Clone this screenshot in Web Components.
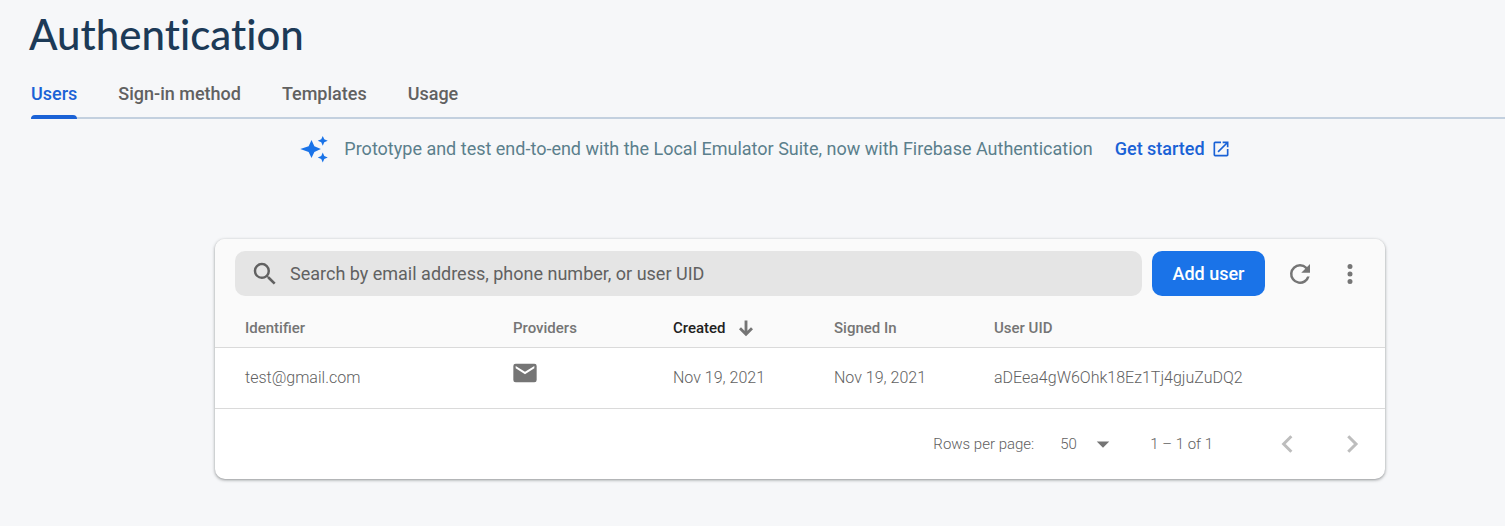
<!DOCTYPE html>
<html lang="en">
<head>
<meta charset="utf-8">
<title>Authentication</title>
<style>
html{background:#f6f7f9}
body{margin:0;font-family:Roboto,sans-serif;color:#757575}
</style>
</head>
<body>
<auth-page></auth-page>

<template id="auth-page">
<style>
:host{display:block}
header{padding:8px 0 0 29px}
h1{margin:0;font:500 42px/52px Lato,sans-serif;font-variant-ligatures:none;color:#1c3a57}
main{padding-bottom:46px}
.banner{padding:10px 0 0 25px}
.card{padding:70px 120px 0 215px}
</style>
<header><h1>Authentication</h1></header>
<nav-tabs>
<nav-tab active>Users</nav-tab><nav-tab>Sign-in method</nav-tab><nav-tab>Templates</nav-tab><nav-tab>Usage</nav-tab>
</nav-tabs>
<main>
<div class="banner"><promo-banner>Prototype and test end-to-end with the Local Emulator Suite, now with Firebase Authentication</promo-banner></div>
<div class="card"><user-card></user-card></div>
</main>
</template>

<template id="nav-tabs">
<style>
:host{display:flex;gap:41px;margin-left:31px;height:59px;box-sizing:border-box;border-bottom:2px solid #c3d0df}
</style>
<slot></slot>
</template>

<template id="nav-tab">
<style>
:host{display:block;--c:#616161}
:host([active]){--c:#1a62d6}
a{display:block;box-sizing:border-box;height:59px;padding-top:22px;font-size:18px;line-height:24px;font-weight:500;color:var(--c);text-decoration:none;position:relative}
:host([active]) a::after{content:"";position:absolute;left:0;right:0;bottom:0;height:4px;border-radius:4px 4px 0 0;background:#1a62d6}
</style>
<a href="#"><slot></slot></a>
</template>

<template id="promo-banner">
<style>
:host{display:flex;align-items:center;justify-content:center;height:40px;font-size:18px;line-height:24px;font-weight:400;color:#5b7f8c}
.spark{margin-right:15px}
a{display:flex;align-items:center;gap:6px;margin-left:22px;font-weight:500;color:#1a62d6;text-decoration:none}
</style>
<ui-icon class="spark" name="spark" size="30" style="color:#1a73e8"></ui-icon>
<span><slot></slot></span>
<a href="#">Get started <ui-icon name="open" size="20"></ui-icon></a>
</template>

<template id="user-card">
<style>
:host{display:block;border-radius:10px;background:#fff;overflow:hidden;box-shadow:0 1px 3px 1px rgba(60,64,67,.2),0 1px 2px rgba(60,64,67,.3)}
</style>
<user-toolbar></user-toolbar>
<user-table></user-table>
<table-pager></table-pager>
</template>

<template id="user-toolbar">
<style>
:host{display:flex;align-items:center;gap:10px;padding:12px 10px 12px 20px;background:#fafafa}
label{flex:1;display:flex;align-items:center;gap:10px;height:45px;padding-left:15px;border-radius:10px;background:#e5e5e5;color:#616161}
input{flex:1;height:45px;padding:0;border:0;outline:0;background:none;font:400 18px/24px Roboto,sans-serif;color:#333}
input::placeholder{color:#616161;opacity:1}
.add{height:45px;min-width:113px;padding:0 20px;border:0;border-radius:10px;background:#1a73e8;color:#fff;font:500 18px/24px Roboto,sans-serif}
.icons{display:flex}
.icons button{display:flex;align-items:center;justify-content:center;width:50px;height:45px;padding:0;border:0;background:none;color:#757575}
</style>
<label><ui-icon name="search" size="30"></ui-icon><input type="text" aria-label="Search" placeholder="Search by email address, phone number, or user UID"></label>
<button class="add">Add user</button>
<div class="icons">
<button aria-label="Refresh"><ui-icon name="refresh" size="30"></ui-icon></button>
<button aria-label="More options"><ui-icon name="more" size="30"></ui-icon></button>
</div>
</template>

<template id="user-table">
<style>
:host{display:block}
table{width:100%;border-collapse:separate;border-spacing:0;table-layout:fixed}
th,td{padding:0;text-align:left;border-bottom:1px solid #dadada}
th:first-child,td:first-child{padding-left:30px}
th{height:39px;background:#fafafa;font-size:15px;font-weight:500;line-height:20px}
td{height:60px;font-size:16px;font-weight:300;line-height:24px;color:#616161}
.id{width:268px}.mid{width:160px}.sorted{width:161px}
.sorted{color:#212121}
.sort{display:flex;align-items:center;gap:10px}
.sort ui-icon{color:#757575}
td ui-icon{margin:0 0 10px -2px;color:#757575}
</style>
<table>
<thead><tr>
<th class="id" scope="col">Identifier</th>
<th class="mid" scope="col">Providers</th>
<th class="mid sorted" scope="col" aria-sort="descending"><span class="sort">Created <ui-icon name="down" size="20"></ui-icon></span></th>
<th class="mid" scope="col">Signed In</th>
<th scope="col">User UID</th>
</tr></thead>
<tbody><tr>
<td>test@gmail.com</td>
<td><ui-icon name="mail" size="28"></ui-icon></td>
<td>Nov 19, 2021</td>
<td>Nov 19, 2021</td>
<td>aDEea4gW6Ohk18Ez1Tj4gjuZuDQ2</td>
</tr></tbody>
</table>
</template>

<template id="table-pager">
<style>
:host{display:flex;align-items:center;justify-content:flex-end;height:70px;padding-right:8px;font-size:15px;line-height:20px;font-weight:300;color:#616161}
.size{display:flex;align-items:center}
.pick{display:grid;align-items:center;width:54px;margin-left:26px}
.pick>*{grid-area:1/1}
.pick ui-icon{justify-self:end;margin-right:-4px;color:#757575;pointer-events:none}
select{appearance:none;width:100%;padding:0;border:0;background:none;font:inherit;color:inherit}
.range{margin:0 49px 0 36px}
.nav{display:flex;gap:15px}
.nav button{display:flex;align-items:center;justify-content:center;width:50px;height:50px;padding:0;border:0;background:none;color:#bdbdbd}
</style>
<div class="size"><label for="rows">Rows per page:</label>
<span class="pick"><select id="rows"><option>50</option></select><ui-icon name="drop" size="30"></ui-icon></span></div>
<span class="range">1 – 1 of 1</span>
<div class="nav">
<button aria-label="Previous page" disabled><ui-icon name="prev" size="30"></ui-icon></button>
<button aria-label="Next page" disabled><ui-icon name="next" size="30"></ui-icon></button>
</div>
</template>

<script>
const ICONS = {
  spark: '<path d="M10 4.800 12.300 9.700 17.500 12 12.300 14.300 10 19.200 7.700 14.300 1 12 7.700 9.700ZM19 1.500l1.200 2.700 2.800 1.200-2.800 1.200L19 9.400l-1.200-2.800L15 5.400l2.800-1.200ZM19 14.800l1.200 2.800 2.800 1.200-2.800 1.200L19 22.700 17.800 20 15 18.800l2.800-1.200Z"/>',
  open: '<path d="M19 19H5V5h7V3H5a2 2 0 0 0-2 2v14a2 2 0 0 0 2 2h14c1.100 0 2-.9 2-2v-7h-2v7zM14 3v2h3.590l-9.830 9.830 1.410 1.410L19 6.410V10h2V3h-7z"/>',
  search: '<path d="M15.500 14h-.790l-.280-.270A6.470 6.470 0 0 0 16 9.500 6.500 6.500 0 1 0 9.500 16c1.610 0 3.090-.590 4.230-1.570l.270.280v.790l5 4.990L20.490 19l-4.990-5zm-6 0C7.010 14 5 11.990 5 9.500S7.010 5 9.500 5 14 7.010 14 9.500 11.990 14 9.500 14z"/>',
  refresh: '<path d="M17.650 6.350A7.960 7.960 0 0 0 12 4a8 8 0 1 0 7.730 10h-2.080A6 6 0 1 1 12 6c1.660 0 3.140.690 4.220 1.780L13 11h7V4l-2.350 2.350z"/>',
  more: '<path d="M12 8a2 2 0 1 0 0-4 2 2 0 0 0 0 4zm0 2a2 2 0 1 0 0 4 2 2 0 0 0 0-4zm0 6a2 2 0 1 0 0 4 2 2 0 0 0 0-4z"/>',
  down: '<path d="M12 3v16M4.800 12.200l7.200 7.200 7.200-7.200" fill="none" stroke="currentColor" stroke-width="3.400"/>',
  mail: '<path d="M20 4H4a2 2 0 0 0-1.990 2L2 18a2 2 0 0 0 2 2h16a2 2 0 0 0 2-2V6a2 2 0 0 0-2-2zm0 4-8 5-8-5V6l8 5 8-5v2z"/>',
  drop: '<path d="m7 10 5 5 5-5z"/>',
  prev: '<path d="m15.500 5.800-6.200 6.200 6.200 6.200" fill="none" stroke="currentColor" stroke-width="2.400"/>',
  next: '<path d="m9 5.800 6.200 6.200L9 18.200" fill="none" stroke="currentColor" stroke-width="2.400"/>'
};

customElements.define('ui-icon', class extends HTMLElement {
  connectedCallback() {
    if (this.shadowRoot) return;
    const size = this.getAttribute('size');
    this.attachShadow({mode: 'open'}).innerHTML =
      `<style>:host{display:block;flex:none;width:${size}px;height:${size}px}svg{display:block;width:100%;height:100%;fill:currentColor}</style>` +
      `<svg viewBox="0 0 24 24" aria-hidden="true">${ICONS[this.getAttribute('name')]}</svg>`;
  }
});

for (const name of ['nav-tab', 'nav-tabs', 'promo-banner', 'user-toolbar', 'user-table', 'table-pager', 'user-card', 'auth-page']) {
  customElements.define(name, class extends HTMLElement {
    constructor() {
      super();
      this.attachShadow({mode: 'open'}).append(document.getElementById(name).content.cloneNode(true));
    }
  });
}
</script>
</body>
</html>
